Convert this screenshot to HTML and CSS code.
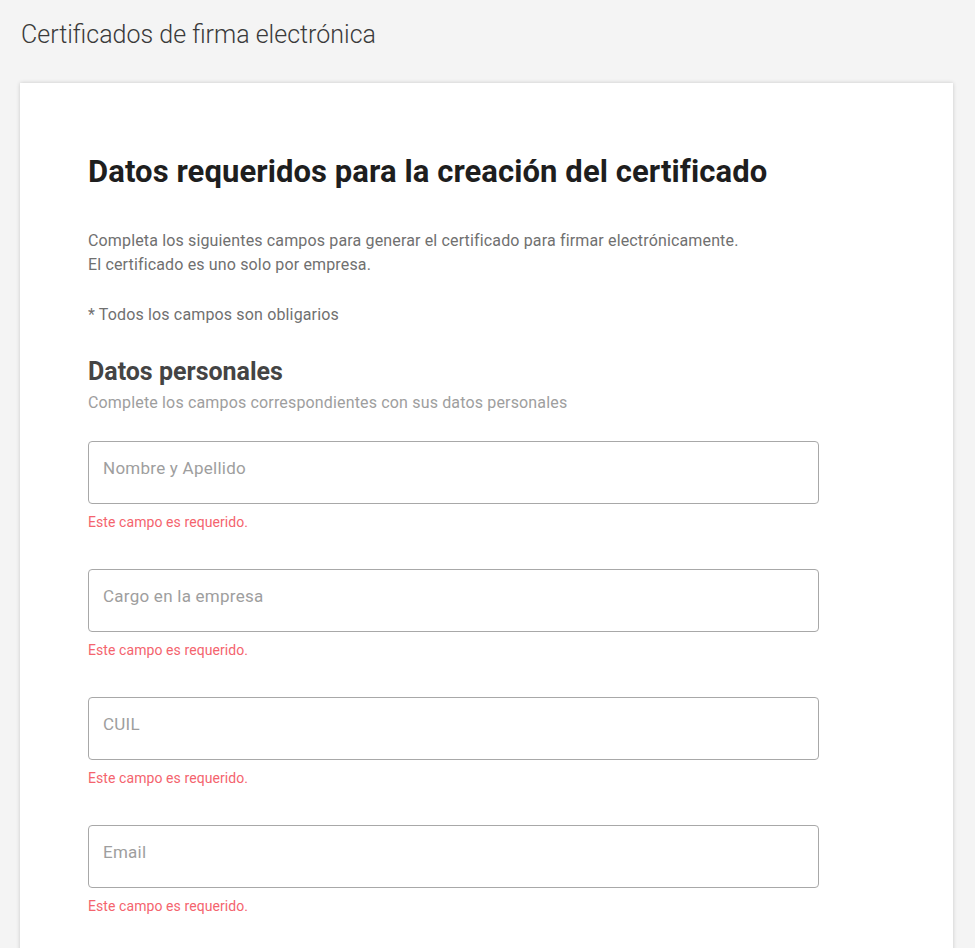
FILE: index.html
```html
<!DOCTYPE html>
<html lang="es">
<head>
<meta charset="utf-8">
<link rel="stylesheet" href="styles.css">
</head>
<body>
<div class="page">
  <h1 class="page-title">Certificados de firma electrónica</h1>
  <div class="card">
    <h2 class="card-title">Datos requeridos para la creación del certificado</h2>
    <p class="intro">Completa los siguientes campos para generar el certificado para firmar electrónicamente.<br>El certificado es uno solo por empresa.</p>
    <p class="note">* Todos los campos son obligarios</p>
    <h3 class="section-title">Datos personales</h3>
    <p class="section-sub">Complete los campos correspondientes con sus datos personales</p>
    <div class="field">
      <input class="input" type="text" placeholder="Nombre y Apellido">
      <div class="error">Este campo es requerido.</div>
    </div>
    <div class="field">
      <input class="input" type="text" placeholder="Cargo en la empresa">
      <div class="error">Este campo es requerido.</div>
    </div>
    <div class="field">
      <input class="input" type="text" placeholder="CUIL">
      <div class="error">Este campo es requerido.</div>
    </div>
    <div class="field">
      <input class="input" type="text" placeholder="Email">
      <div class="error">Este campo es requerido.</div>
    </div>
  </div>
</div>
</body>
</html>
```
FILE: styles.css
```css
* { box-sizing: border-box; }
html, body {
  margin: 0;
  padding: 0;
  background: #f4f4f4;
  font-family: Roboto, "Liberation Sans", sans-serif;
  overflow: hidden;
}
.page {
  padding: 20px 22px 0 20px;
}
.page-title {
  margin: 0 0 0 1px;
  font-size: 25px;
  font-weight: 300;
  color: #3a3a3a;
  line-height: 30px;
}
.card {
  margin-top: 33px;
  background: #fff;
  box-shadow: 0 0 4px rgba(0,0,0,0.18);
  padding: 70px 68px 40px 68px;
  min-height: 900px;
}
.card-title {
  margin: 0;
  font-size: 31px;
  letter-spacing: 0.08px;
  font-weight: 700;
  color: #1e1e1e;
  line-height: 38px;
}
.intro {
  margin: 38px 0 0 0;
  font-size: 16px;
  letter-spacing: 0.15px;
  line-height: 24px;
  color: #707070;
}
.note {
  margin: 26px 0 0 0;
  font-size: 16px;
  letter-spacing: 0.15px;
  line-height: 24px;
  color: #707070;
}
.section-title {
  margin: 30px 0 0 0;
  font-size: 25px;
  font-weight: 700;
  color: #444;
  line-height: 30px;
}
.section-sub {
  margin: 6px 0 0 0;
  font-size: 16px;
  letter-spacing: 0.16px;
  line-height: 20px;
  color: #9e9e9e;
}
.field {
  width: 731px;
  margin-top: 28px;
  height: 99px;
}
.field + .field { margin-top: 29px; }
.input {
  display: block;
  width: 100%;
  height: 63px;
  border: 1px solid #a8a8a8;
  border-radius: 4px;
  padding: 0 14px 10px 14px;
  font-family: Roboto, "Liberation Sans", sans-serif;
  font-size: 17px;
  letter-spacing: 0.25px;
  color: #333;
  background: #fff;
  outline: none;
}
.input::placeholder { color: #9e9e9e; }
.error {
  margin-top: 10px;
  font-size: 14px;
  letter-spacing: 0.08px;
  line-height: 16px;
  color: #f4646e;
}
```
